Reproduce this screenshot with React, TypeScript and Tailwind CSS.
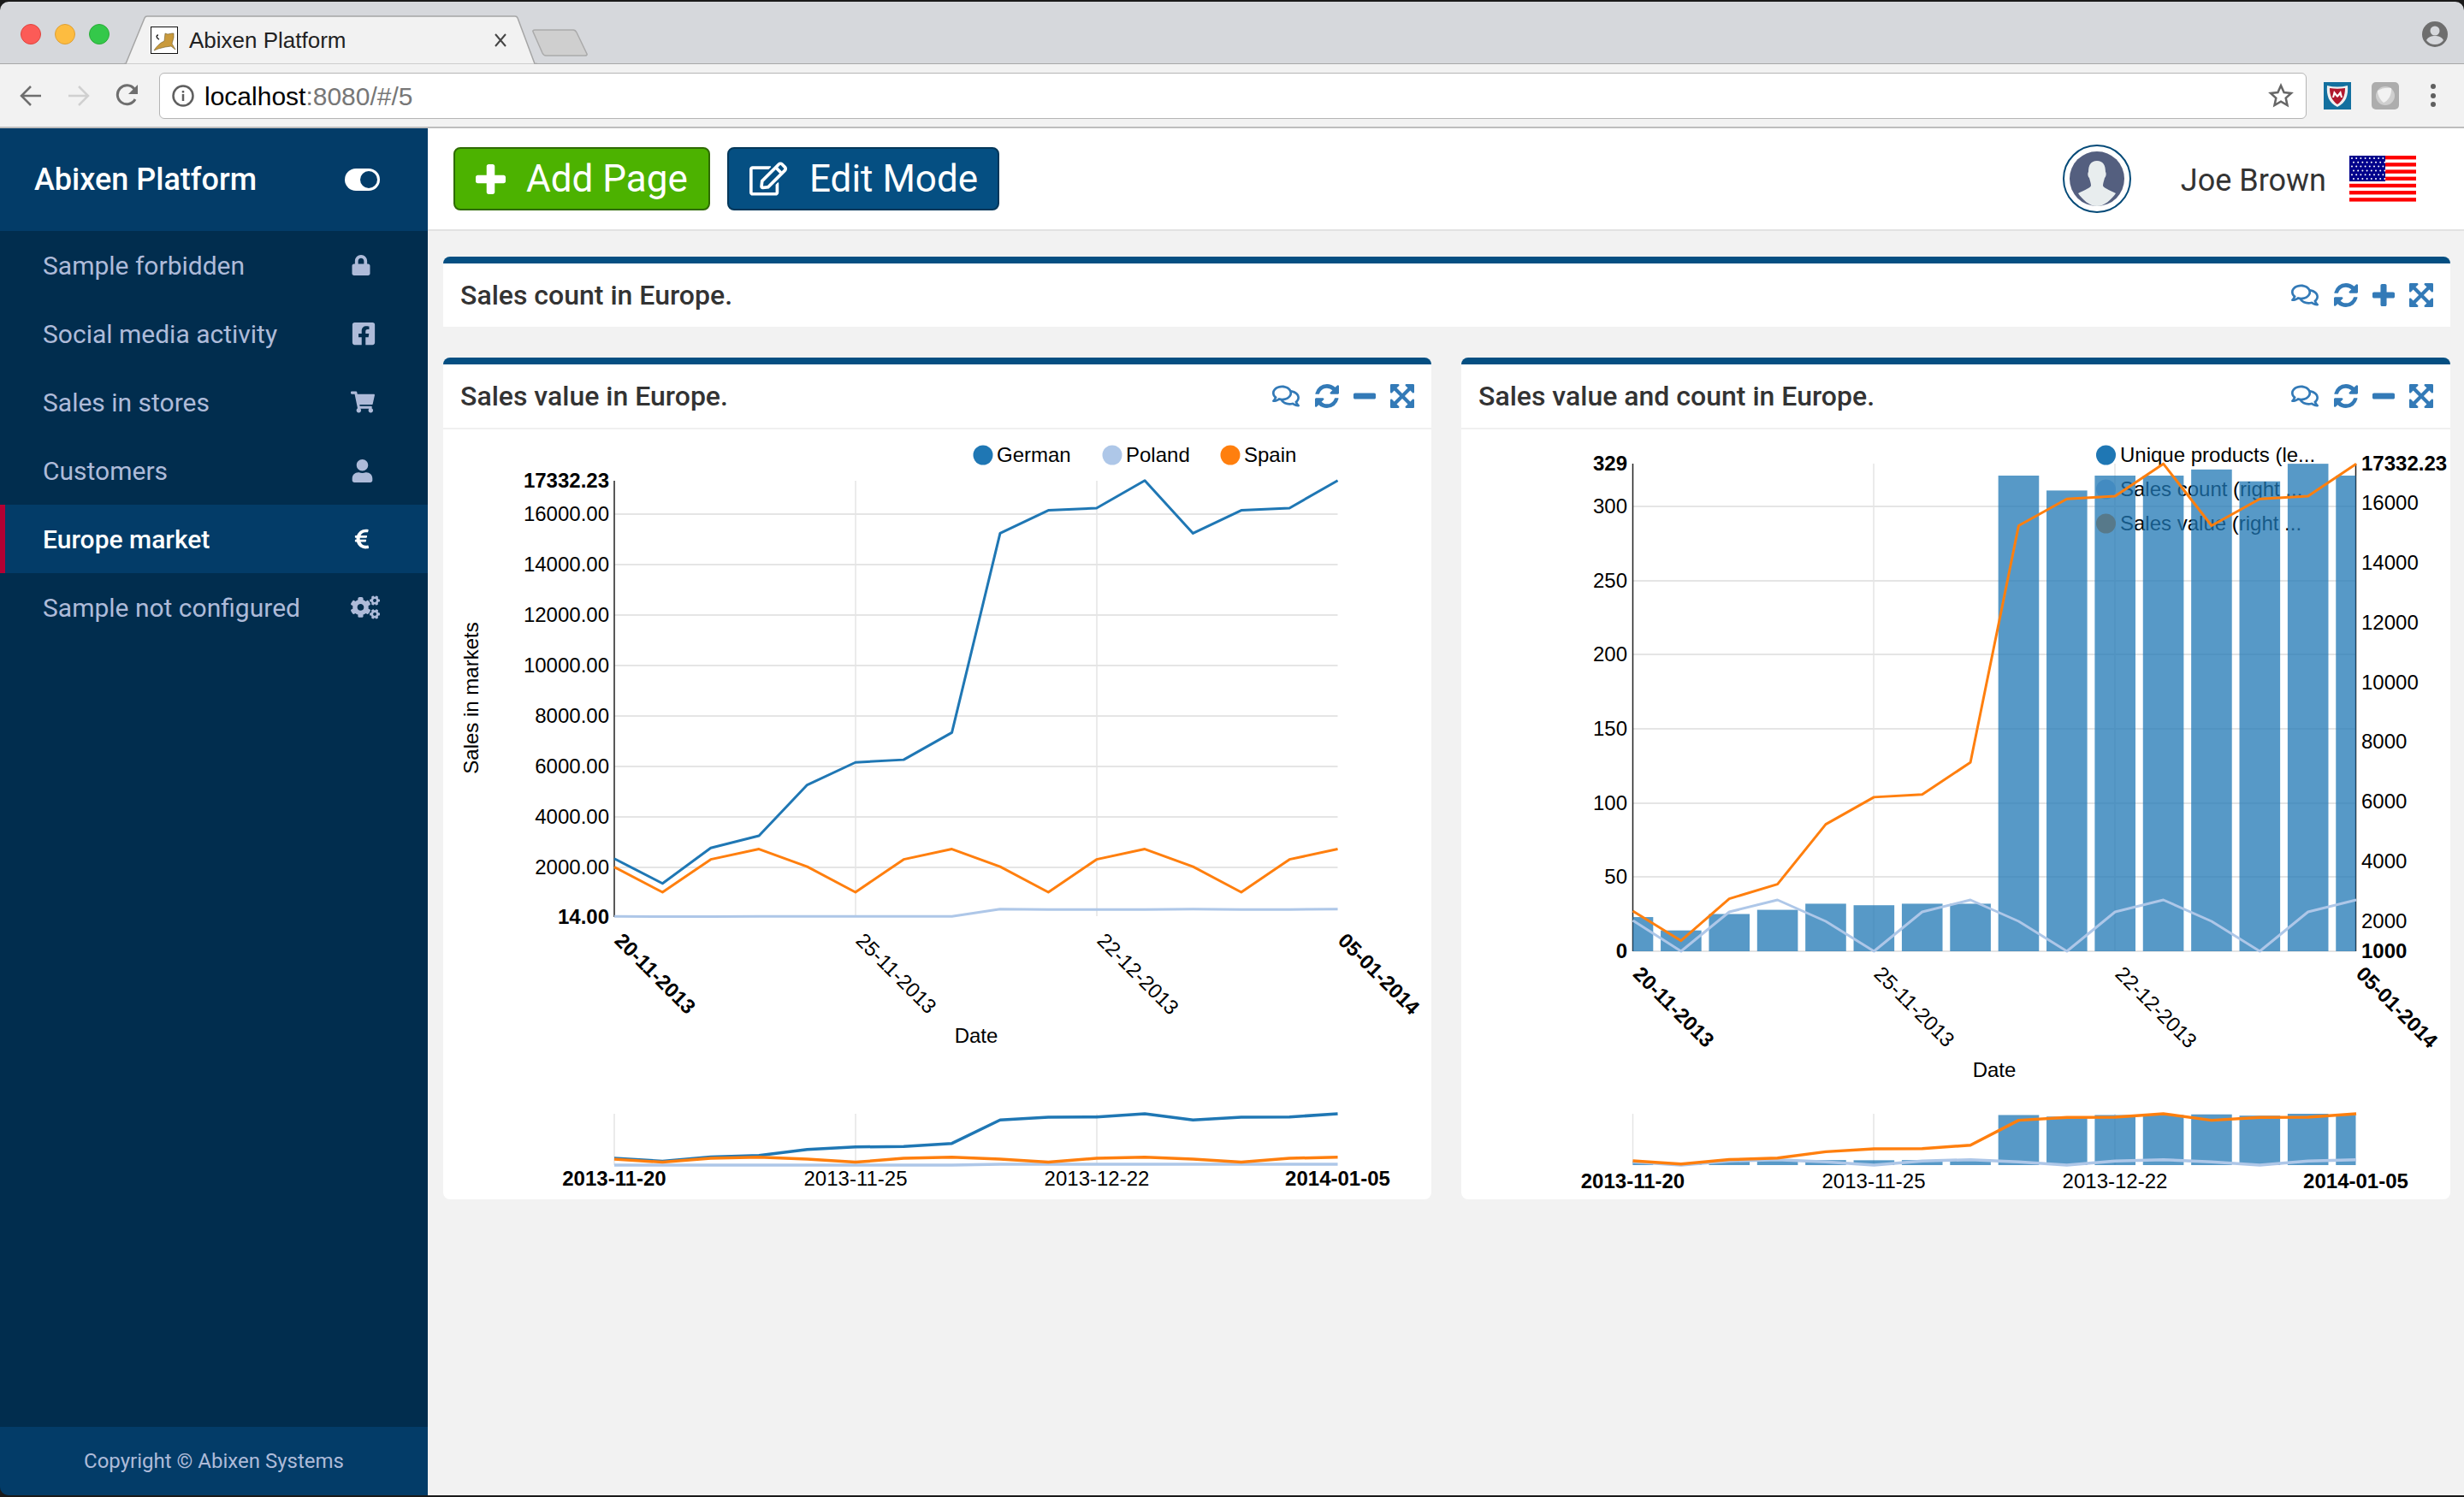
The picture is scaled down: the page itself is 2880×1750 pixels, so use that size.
import React from 'react';
import {
  FaCogs, FaEuroSign, FaFacebookSquare, FaLock,
  FaRegComments, FaRegEdit, FaShoppingCart, FaUser,
} from 'react-icons/fa';

const NAV = [
  { label: 'Sample forbidden', Icon: FaLock, size: 24 },
  { label: 'Social media activity', Icon: FaFacebookSquare, size: 30 },
  { label: 'Sales in stores', Icon: FaShoppingCart, size: 28 },
  { label: 'Customers', Icon: FaUser, size: 27 },
  { label: 'Europe market', Icon: FaEuroSign, size: 26, active: true },
  { label: 'Sample not configured', Icon: FaCogs, size: 34 },
];

// series are read off the picture, zoomed y values, mapped back to page px
const zy = (v: number) => 410 + v / 2.24;
const GERMAN = [1330, 1395, 1302, 1270, 1137, 1078, 1071, 1000, 478, 418, 412, 340, 478, 418, 412, 340].map(zy);
const SPAIN = [1352, 1418, 1332, 1305, 1351, 1418, 1332, 1305, 1351, 1418, 1332, 1305, 1351, 1418, 1332, 1305].map(zy);
const POLAND = [1481, 1482, 1482, 1481, 1481, 1481, 1481, 1481, 1462, 1463, 1463, 1463, 1462, 1463, 1463, 1462].map(zy);

const VALUE = [1467, 1545, 1435, 1397, 1240, 1169, 1162, 1078, 458, 388, 381, 296, 458, 388, 381, 296].map(zy);
const COUNT = [1076, 1112, 1066, 1052, 1077, 1112, 1066, 1052, 1077, 1112, 1066, 1052, 1077, 1112, 1066, 1052];
const BARS = [1483, 1518, 1475, 1464, 1448, 1452, 1448, 1448, 327, 366, 327, 327, 311, 342, 296, 327].map(zy);

// older font awesome glyphs, the current package redrew these
const PLUS = 'M1600 736v192q0 40-28 68t-68 28h-416v416q0 40-28 68t-68 28h-192q-40 0-68-28t-28-68v-416h-416q-40 0-68-28t-28-68v-192q0-40 28-68t68-28h416v-416q0-40 28-68t68-28h192q40 0 68 28t28 68v416h416q40 0 68 28t28 68z';
const MINUS = 'M1600 736v192q0 40-28 68t-68 28h-1216q-40 0-68-28t-28-68v-192q0-40 28-68t68-28h1216q40 0 68 28t28 68z';
const REFRESH = 'M1639 1056q0 5-1 7-64 268-268 434.500t-478 166.500q-146 0-282.500-55t-243.500-157l-129 129q-19 19-45 19t-45-19-19-45v-448q0-26 19-45t45-19h448q26 0 45 19t19 45-19 45l-137 137q71 66 161 102t187 36q134 0 250-65t186-179q11-17 53-117 8-23 30-23h192q13 0 22.500 9.500t9.500 22.500zm25-800v448q0 26-19 45t-45 19h-448q-26 0-45-19t-19-45 19-45l138-138q-148-137-349-137-134 0-250 65t-186 179q-11 17-53 117-8 23-30 23h-199q-13 0-22.500-9.500t-9.500-22.500v-7q65-268 270-434.500t480-166.500q146 0 284 55.500t245 156.500l130-129q19-19 45-19t45 19 19 45z';
const EXPAND = 'M1411 541l-355 355 355 355 144-144q29-31 70-14 39 17 39 59v448q0 26-19 45t-45 19h-448q-42 0-59-40-17-39 14-69l144-144-355-355-355 355 144 144q31 30 14 69-17 40-59 40h-448q-26 0-45-19t-19-45v-448q0-42 40-59 39-17 69 14l144 144 355-355-355-355-144 144q-19 19-45 19-12 0-24-5-40-17-40-59v-448q0-26 19-45t45-19h448q42 0 59 40 17 39-14 69l-144 144 355 355 355-355-144-144q-31-30-14-69 17-40 59-40h448q26 0 45 19t19 45v448q0 42-39 59-13 5-25 5-26 0-45-19z';

const Glyph = ({ d, box, size, className }: { d: string; box: string; size: number; className?: string }) => (
  <svg width={size} height={size} viewBox={box} fill="currentColor" className={className}>
    <path d={d} />
  </svg>
);

const Line = ({ x0, ys, color, map, width = 3 }: { x0: number; ys: number[]; color: string; map?: (y: number) => number; width?: number }) => (
  <polyline
    fill="none"
    stroke={color}
    strokeWidth={width}
    strokeLinejoin="round"
    points={ys.map((y, i) => `${x0 + 56.37 * i},${map ? map(y) : y}`).join(' ')}
  />
);

const Dates = ({ xs, y, labels }: { xs: number[]; y: number; labels: string[] }) => (
  <>
    {labels.map((label, i) => (
      <text
        key={label}
        x={xs[i]}
        y={y}
        textAnchor="middle"
        fontWeight={i === 0 || i === 3 ? 700 : 400}
      >
        {label}
      </text>
    ))}
  </>
);

const Rotated = ({ xs, y, labels }: { xs: number[]; y: number; labels: string[] }) => (
  <>
    {labels.map((label, i) => (
      <text
        key={label}
        x={xs[i] - 1}
        y={y}
        transform={`rotate(45 ${xs[i] - 1} ${y})`}
        fontWeight={i === 0 || i === 3 ? 700 : 400}
      >
        {label}
      </text>
    ))}
  </>
);

const SalesChart = () => {
  const xs = [718, 1000, 1282, 1563.5];
  const ticks = [
    ['16000.00', 601], ['14000.00', 660], ['12000.00', 719], ['10000.00', 778],
    ['8000.00', 837], ['6000.00', 896], ['4000.00', 955], ['2000.00', 1014],
  ] as const;
  const mini = (y: number) => 1302 + ((y - 562) * 60) / 510;
  return (
    <svg viewBox="518 502 1155 900" className="block h-[900px] w-[1155px] font-['Liberation_Sans',sans-serif] text-[24px]">
      {ticks.map(([, y]) => (
        <line key={y} x1={718} x2={1563.5} y1={y} y2={y} stroke="#e5e5e5" strokeWidth={2} />
      ))}
      {xs.slice(1, 3).map(x => (
        <line key={x} x1={x} x2={x} y1={562} y2={1071} stroke="#e5e5e5" strokeWidth={1.5} />
      ))}
      <line x1={718} x2={718} y1={562} y2={1072} stroke="#222" strokeWidth={1.5} />
      {ticks.map(([t, y]) => (
        <text key={t} x={712} y={y + 7.5} textAnchor="end">{t}</text>
      ))}
      <text x={712} y={570} textAnchor="end" fontWeight={700}>17332.23</text>
      <text x={712} y={1080} textAnchor="end" fontWeight={700}>14.00</text>
      <text transform="translate(559 816) rotate(-90)" textAnchor="middle">Sales in markets</text>

      <circle cx={1149} cy={532} r={11.5} fill="#1f77b4" />
      <text x={1165} y={540}>German</text>
      <circle cx={1300} cy={532} r={11.5} fill="#aec7e8" />
      <text x={1316} y={540}>Poland</text>
      <circle cx={1438} cy={532} r={11.5} fill="#ff7f0e" />
      <text x={1454} y={540}>Spain</text>

      <Line x0={718} ys={GERMAN} color="#1f77b4" />
      <Line x0={718} ys={POLAND} color="#aec7e8" />
      <Line x0={718} ys={SPAIN} color="#ff7f0e" />

      <Rotated xs={xs} y={1101} labels={['20-11-2013', '25-11-2013', '22-12-2013', '05-01-2014']} />
      <text x={1141} y={1219} textAnchor="middle">Date</text>

      {xs.slice(0, 3).map(x => (
        <line key={x} x1={x} x2={x} y1={1302} y2={1362} stroke="#e5e5e5" strokeWidth={1.5} />
      ))}
      <Line x0={718} ys={GERMAN} color="#1f77b4" map={mini} width={3.5} />
      <Line x0={718} ys={POLAND} color="#aec7e8" map={mini} width={3.5} />
      <Line x0={718} ys={SPAIN} color="#ff7f0e" map={mini} width={3.5} />
      <Dates xs={xs} y={1386} labels={['2013-11-20', '2013-11-25', '2013-12-22', '2014-01-05']} />
    </svg>
  );
};

const ValueCountChart = () => {
  const xs = [1908.5, 2190, 2472, 2753.5];
  const left = [['300', 592], ['250', 679], ['200', 765], ['150', 852], ['100', 939], ['50', 1025]] as const;
  const right = [['16000', 588], ['14000', 658], ['12000', 728], ['10000', 798], ['8000', 867], ['6000', 937], ['4000', 1007], ['2000', 1077]] as const;
  const mini = (y: number) => 1362 - ((1112 - y) * 60) / 570;
  const barAt = (i: number) => {
    const c = 1908.5 + 56.37 * i;
    const a = Math.max(c - 23.8, 1908.5);
    const b = Math.min(c + 23.8, 2753.5);
    return { x: a, w: b - a };
  };
  return (
    <svg viewBox="1708 502 1156 900" className="block h-[900px] w-[1156px] font-['Liberation_Sans',sans-serif] text-[24px]">
      {left.map(([, y]) => (
        <line key={y} x1={1908.5} x2={2753.5} y1={y} y2={y} stroke="#e5e5e5" strokeWidth={2} />
      ))}
      <line x1={1908.5} x2={2753.5} y1={1112} y2={1112} stroke="#e5e5e5" strokeWidth={2} />
      {xs.slice(1, 3).map(x => (
        <line key={x} x1={x} x2={x} y1={542} y2={1112} stroke="#e5e5e5" strokeWidth={1.5} />
      ))}
      <line x1={1908.5} x2={1908.5} y1={542} y2={1112} stroke="#222" strokeWidth={1.5} />
      <line x1={2753.5} x2={2753.5} y1={542} y2={1112} stroke="#222" strokeWidth={1.5} />

      <circle cx={2461.5} cy={532} r={11.5} fill="#1f77b4" />
      <text x={2478} y={540}>Unique products (le...</text>
      <circle cx={2461.5} cy={572} r={11.5} fill="#aec7e8" />
      <text x={2478} y={580}>Sales count (right ...</text>
      <circle cx={2461.5} cy={612} r={11.5} fill="#ff7f0e" />
      <text x={2478} y={620}>Sales value (right ...</text>

      {BARS.map((y, i) => {
        const { x, w } = barAt(i);
        return <rect key={i} x={x} y={y} width={w} height={1112 - y} fill="#1f77b4" fillOpacity={0.75} />;
      })}
      <Line x0={1908.5} ys={COUNT} color="#aec7e8" />
      <Line x0={1908.5} ys={VALUE} color="#ff7f0e" />

      {left.map(([t, y]) => (
        <text key={t} x={1902} y={y + 8} textAnchor="end">{t}</text>
      ))}
      <text x={1902} y={550} textAnchor="end" fontWeight={700}>329</text>
      <text x={1902} y={1120} textAnchor="end" fontWeight={700}>0</text>
      {right.map(([t, y]) => (
        <text key={t} x={2760} y={y + 8}>{t}</text>
      ))}
      <text x={2760} y={550} fontWeight={700}>17332.23</text>
      <text x={2760} y={1120} fontWeight={700}>1000</text>

      <Rotated xs={xs} y={1140} labels={['20-11-2013', '25-11-2013', '22-12-2013', '05-01-2014']} />
      <text x={2331} y={1259} textAnchor="middle">Date</text>

      {xs.slice(0, 3).map(x => (
        <line key={x} x1={x} x2={x} y1={1302} y2={1362} stroke="#e5e5e5" strokeWidth={1.5} />
      ))}
      {BARS.map((y, i) => {
        const { x, w } = barAt(i);
        return <rect key={i} x={x} y={mini(y)} width={w} height={1362 - mini(y)} fill="#1f77b4" fillOpacity={0.75} />;
      })}
      <Line x0={1908.5} ys={COUNT} color="#aec7e8" map={mini} width={3.5} />
      <Line x0={1908.5} ys={VALUE} color="#ff7f0e" map={mini} width={3.5} />
      <Dates xs={xs} y={1389} labels={['2013-11-20', '2013-11-25', '2013-12-22', '2014-01-05']} />
    </svg>
  );
};

const PanelActions = ({ collapsed }: { collapsed?: boolean }) => (
  <div className="flex items-center text-[#337ab7]">
    <FaRegComments size={32} />
    <Glyph d={REFRESH} box="128 128 1536 1536" size={28} className="ml-[18px]" />
    <Glyph d={collapsed ? PLUS : MINUS} box="192 128 1408 1408" size={26} className="ml-[17px]" />
    <Glyph d={EXPAND} box="128 128 1536 1536" size={28} className="ml-[17px]" />
  </div>
);

const PanelHead = ({ title, collapsed }: { title: string; collapsed?: boolean }) => (
  <div className="flex h-[74px] items-center justify-between pl-5 pr-5">
    <h2 className="text-[32px] font-medium text-[#333]">{title}</h2>
    <PanelActions collapsed={collapsed} />
  </div>
);

const Flag = () => (
  <svg width="78" height="54" viewBox="0 0 78 54" className="block">
    <rect width="78" height="54" fill="#fff" />
    {[0, 1, 2, 3, 4, 5, 6].map(i => (
      <rect key={i} y={i * 8.2} width="78" height="4.4" fill="#f00" />
    ))}
    <rect width="42" height="30" fill="#00008b" />
    {Array.from({ length: 6 }).map((_, r) =>
      Array.from({ length: 8 }).map((_, c) => (
        <circle key={`${r}-${c}`} cx={3 + c * 5.2 + (r % 2) * 2} cy={3 + r * 4.8} r="1" fill="#fff" />
      )),
    )}
  </svg>
);

const Avatar = () => (
  <svg width="80" height="80" viewBox="0 0 80 80" className="block">
    <circle cx="40" cy="40" r="39" fill="#fff" stroke="#044a78" strokeWidth="2" />
    <circle cx="40" cy="40" r="32" fill="#545f7f" />
    <path
      d="M30 32c0-8 3-13 10-13s10 5 10 13c1 1 1 5-1 7-1 4-2 6-2 9 0 2 7 5 15 9-5 7-13 15-22 15s-17-8-22-15c8-4 15-7 15-9 0-3-1-5-2-9-2-2-2-6-1-7z"
      fill="#e8edee"
    />
  </svg>
);

const Tab = () => (
  <div className="relative ml-[17px] flex h-[57px] w-[483px] items-center pl-[31px] pr-[36px] mb-[-1px]">
    <svg className="absolute inset-0" width="483" height="57" viewBox="0 0 483 57">
      <path d="M0 56.5h2L24 3c.6-1.5 1.5-2 3-2h430c1.500 0 2.400.5 3 2l20 53.500h3" fill="#f2f2f2" stroke="#a5a5a5" strokeWidth="1.500" />
    </svg>
    <svg className="relative" width="32" height="32" viewBox="0 0 32 32">
      <rect x="0.500" y="0.500" width="31" height="31" fill="#fff" stroke="#111" />
      <path d="M4 28c3-5 7-9 12-11l1-9 3 1 5-1 2 0 0 5-2 7 4 7-5-4-7 1-8 2z" fill="#c99a3c" stroke="#6b5a2a" strokeWidth="0.600" />
      <path d="M10 15c-3-1-4-5-1-5" fill="none" stroke="#222" strokeWidth="1.500" />
    </svg>
    <span className="relative ml-[13px] mt-[2px] text-[26px] text-[#222] font-['Liberation_Sans',sans-serif]">Abixen Platform</span>
    <svg className="relative ml-auto" width="14" height="16" viewBox="0 0 14 16">
      <path d="M1 1l12 14M13 1L1 15" stroke="#444" strokeWidth="2" fill="none" />
    </svg>
  </div>
);

const BrowserChrome = () => (
  <>
    <div className="flex h-[73px] items-end border-b border-[#a8a8a8] bg-[#d6d8dc] rounded-t-[10px]">
      <div className="mb-[22px] flex gap-4 pl-6">
        <span className="h-6 w-6 rounded-full bg-[#fc5b57] border border-[#e0443e]" />
        <span className="h-6 w-6 rounded-full bg-[#fdbc40] border border-[#dea034]" />
        <span className="h-6 w-6 rounded-full bg-[#34c84a] border border-[#2aac38]" />
      </div>
      <Tab />
      <svg className="mb-[8px] -ml-[6px]" width="66" height="32" viewBox="0 0 66 32">
        <path d="M3 1h45c2 0 3 1 4 3l12 25c.500 1-.500 2-2 2H16c-2 0-3-1-4-3L1 3c-.500-1 .500-2 2-2z" fill="#cfcfcf" stroke="#aaa" strokeWidth="1.500" />
      </svg>
      <svg className="ml-auto mb-[19px] mr-[19px]" width="30" height="30" viewBox="0 0 30 30">
        <circle cx="15" cy="15" r="15" fill="#6e6e6e" />
        <circle cx="15" cy="11" r="5.500" fill="#d6d8dc" />
        <path d="M5 22c2-4 6-5 10-5s8 1 10 5c-2 3-6 5-10 5s-8-2-10-5z" fill="#d6d8dc" />
      </svg>
    </div>
    <div className="flex h-[75px] items-center border-b-2 border-[#bdbdbd] bg-[#f2f2f2]">
      <svg className="ml-[23px]" width="26" height="26" viewBox="0 0 26 26">
        <path d="M25 13H3M13 2L2 13l11 11" fill="none" stroke="#6e6e6e" strokeWidth="2.500" />
      </svg>
      <svg className="ml-[30px]" width="26" height="26" viewBox="0 0 26 26">
        <path d="M1 13h22M13 2l11 11-11 11" fill="none" stroke="#d0d0d0" strokeWidth="2.500" />
      </svg>
      <svg className="ml-[30px]" width="28" height="28" viewBox="0 0 28 28">
        <path d="M23 18a11 11 0 1 1-1-12" fill="none" stroke="#6e6e6e" strokeWidth="3" />
        <path d="M26 1v11H15z" fill="#6e6e6e" />
      </svg>
      <div className="ml-[23px] flex h-[54px] w-[2510px] items-center rounded-[6px] border border-[#b5b5b5] bg-white pl-[14px] pr-[14px] font-['Liberation_Sans',sans-serif]">
        <svg width="26" height="26" viewBox="0 0 26 26">
          <circle cx="13" cy="13" r="11.500" fill="none" stroke="#5f5f5f" strokeWidth="2.500" />
          <path d="M13 11v8M13 7v2.500" stroke="#5f5f5f" strokeWidth="2.500" />
        </svg>
        <span className="ml-[12px] mt-[2px] text-[30px] text-black">
          localhost<span className="text-[#777]">:8080/#/5</span>
        </span>
        <svg className="ml-auto" width="30" height="30" viewBox="0 0 30 30">
          <path d="M15 3l3.600 8 8.400.9-6.300 5.700 1.800 8.400L15 21.700 7.500 26l1.800-8.400L3 11.900l8.400-.9z" fill="none" stroke="#666" strokeWidth="2.500" />
        </svg>
      </div>
      <svg className="ml-[20px]" width="32" height="32" viewBox="0 0 32 32">
        <rect width="32" height="32" fill="#13709f" />
        <path d="M4 4c8 2 16 2 24 0 1 12-2 20-12 25C6 24 3 16 4 4z" fill="#f0f0f0" />
        <path d="M7 7c6 1 12 1 18 0 0 9-3 15-9 19C10 22 7 16 7 7z" fill="#b0182e" />
        <path d="M10 18l2-8 4 5 4-5 2 8-2 0-1-3-3 3-3-3-1 3z" fill="#fff" />
      </svg>
      <svg className="ml-[24px]" width="32" height="32" viewBox="0 0 32 32">
        <rect width="32" height="32" rx="5" fill="#adadad" />
        <circle cx="16" cy="16" r="11" fill="#cfcfcf" />
        <path d="M7 10c5-3 10-4 16-3 1 8-4 15-9 17C10 21 7 15 7 10z" fill="#f2f2f2" />
      </svg>
      <div className="ml-[37px] flex flex-col gap-[4.500px]">
        <span className="h-[6px] w-[6px] rounded-full bg-[#5f5f5f]" />
        <span className="h-[6px] w-[6px] rounded-full bg-[#5f5f5f]" />
        <span className="h-[6px] w-[6px] rounded-full bg-[#5f5f5f]" />
      </div>
    </div>
  </>
);

const Sidebar = () => (
  <aside className="flex w-[500px] shrink-0 flex-col overflow-hidden rounded-bl-[10px] bg-[#012d4e]">
    <div className="flex h-[120px] items-center justify-between bg-[#033c68] pl-10 pr-[56px]">
      <span className="text-[36px] font-medium text-white">Abixen Platform</span>
      <div className="flex h-[26px] w-[41px] items-center justify-end rounded-full bg-white pr-[3px]">
        <span className="h-[20px] w-[20px] rounded-full bg-[#033c68]" />
      </div>
    </div>
    <nav className="flex-1">
      {NAV.map(({ label, Icon, size, active }) => (
        <div
          key={label}
          className={
            active
              ? 'flex h-20 items-center border-l-[6px] border-[#b30033] bg-[#033c68] pl-11 text-[30px] font-medium text-white'
              : 'flex h-20 items-center pl-[50px] text-[30px] text-[#aebbd9]'
          }
        >
          <span className="flex-1">{label}</span>
          <span className="w-[90px]">
            <Icon size={size} />
          </span>
        </div>
      ))}
    </nav>
    <div className="flex h-20 items-center justify-center bg-[#033c68] text-[24px] text-[#aebbd9]">
      Copyright © Abixen Systems
    </div>
  </aside>
);

const TopBar = () => (
  <header className="flex h-[120px] items-center border-b-2 border-[#e2e2e2] bg-white pl-[30px] pr-[56px]">
    <button className="flex h-[74px] w-[300px] items-center rounded-[8px] border-2 border-[#2e6b00] bg-[#4cb200] pl-6 text-[44px] text-white">
      <Glyph d={PLUS} box="192 128 1408 1408" size={35} />
      <span className="ml-[24px]">Add Page</span>
    </button>
    <button className="ml-5 flex h-[74px] w-[318px] items-center rounded-[8px] border-2 border-[#03375a] bg-[#054f82] pl-6 text-[44px] text-white">
      <FaRegEdit size={44} />
      <span className="ml-[26px]">Edit Mode</span>
    </button>
    <div className="ml-auto flex items-center">
      <Avatar />
      <span className="ml-[58px] mt-1 text-[36px] text-[#333]">Joe Brown</span>
      <span className="ml-[27px]"><Flag /></span>
    </div>
  </header>
);

export default function App() {
  return (
    <div className="flex h-screen w-full flex-col bg-[#1a1a1a] pt-[2px] pb-[2px] font-['Roboto',sans-serif]">
      <BrowserChrome />
      <div className="flex min-h-0 flex-1">
        <Sidebar />
        <main className="flex-1 bg-[#f2f2f2]">
          <TopBar />
          <div className="pl-[18px] pr-4 pt-[30px]">
            <section className="overflow-hidden rounded-[8px] rounded-b-none border-t-8 border-[#054f82] bg-white">
              <PanelHead title="Sales count in Europe." collapsed />
            </section>
            <div className="mt-9 flex justify-between">
              <section className="w-[1155px] overflow-hidden rounded-[8px] border-t-8 border-[#054f82] bg-white">
                <div className="border-b-2 border-[#f0f0f0]">
                  <PanelHead title="Sales value in Europe." />
                </div>
                <SalesChart />
              </section>
              <section className="w-[1156px] overflow-hidden rounded-[8px] border-t-8 border-[#054f82] bg-white">
                <div className="border-b-2 border-[#f0f0f0]">
                  <PanelHead title="Sales value and count in Europe." />
                </div>
                <ValueCountChart />
              </section>
            </div>
          </div>
        </main>
      </div>
    </div>
  );
}
